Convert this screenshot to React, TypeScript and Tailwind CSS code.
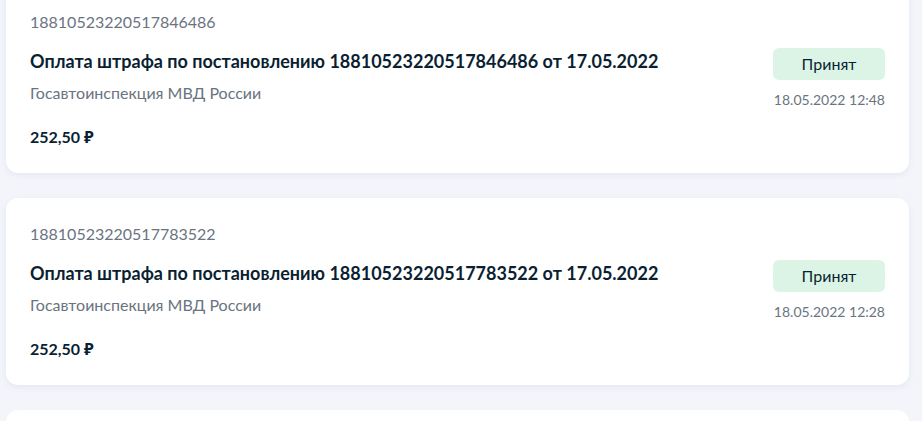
const payments = [
  {
    id: "18810523220517846486",
    title: "Оплата штрафа по постановлению 18810523220517846486 от 17.05.2022",
    date: "18.05.2022 12:48",
  },
  {
    id: "18810523220517783522",
    title: "Оплата штрафа по постановлению 18810523220517783522 от 17.05.2022",
    date: "18.05.2022 12:28",
  },
];

export default function App() {
  return (
    <div
      className="h-[421px] overflow-hidden bg-[#f3f5fa]"
      style={{ fontFamily: "Lato, 'Noto Sans', sans-serif" }}
    >
      <div className="ml-[6px] mr-[13px] -mt-[14px] flex flex-col gap-[25px]">
        {payments.map((p) => (
          <div
            key={p.id}
            className="rounded-xl bg-white px-6 pt-6 pb-6 shadow-[0_2px_6px_rgba(120,140,190,0.12)]"
          >
            <div className="text-[16px] leading-6 text-[#6a7480]">{p.id}</div>
            <div className="mt-[14px] flex items-start justify-between">
              <div>
                <div className="text-[18px] font-bold leading-[26px] text-[#0b1f33]">
                  {p.title}
                </div>
                <div className="mt-[7px] text-[16px] leading-6 text-[#6a7480]">
                  Госавтоинспекция МВД России
                </div>
                <div className="mt-5 text-[16px] font-bold leading-6 text-[#0b1f33]">
                  252,50 ₽
                </div>
              </div>
              <div className="flex flex-col items-end">
                <div className="flex h-8 w-[112px] items-center justify-center rounded-md bg-[#dcf4e5] text-[16px] text-[#0b1f33]">
                  Принят
                </div>
                <div className="mt-[10px] text-[14px] leading-5 text-[#6a7480]">
                  {p.date}
                </div>
              </div>
            </div>
          </div>
        ))}
        {/* next card, only its top edge is in view */}
        <div className="h-[40px] rounded-t-xl bg-white" />
      </div>
    </div>
  );
}
